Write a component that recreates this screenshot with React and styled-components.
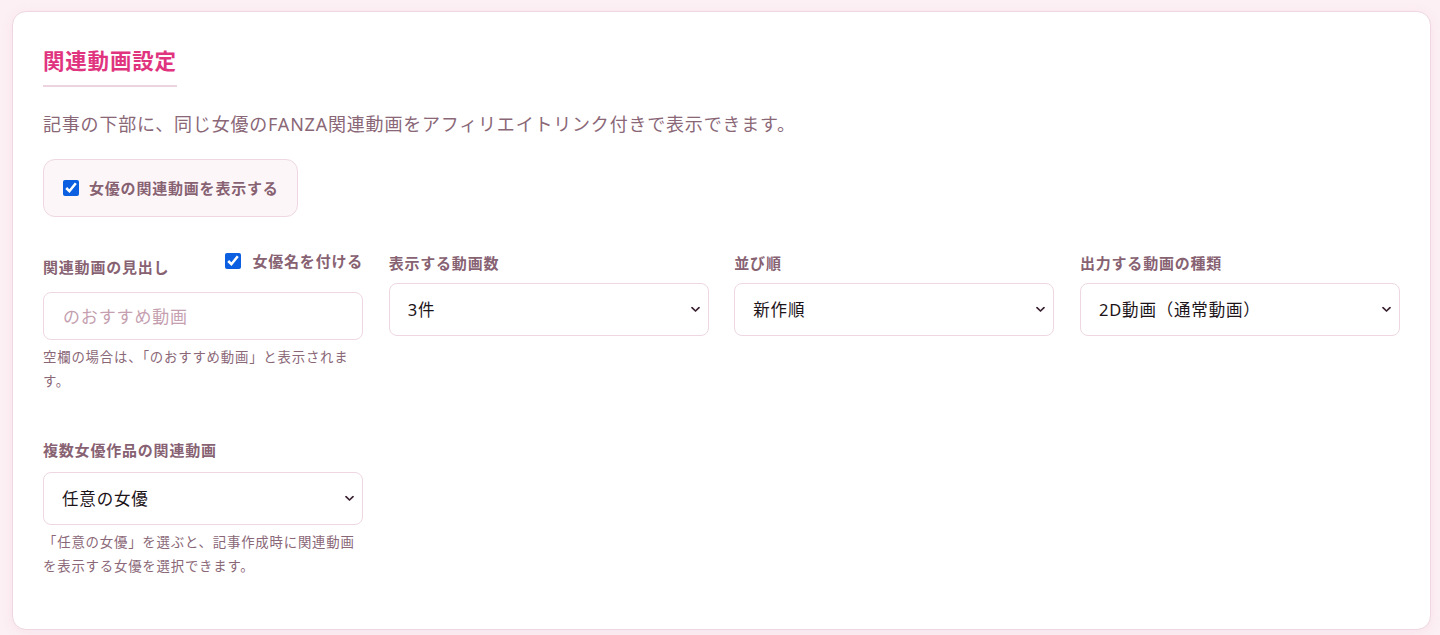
import React from 'react'
import styled, { createGlobalStyle } from 'styled-components'

const colors = {
  page: '#fcf0f4',
  border: '#eed7e2',
  pink: '#e0347f',
  text: '#8a6777',
  label: '#876272',
  placeholder: '#c59fb0',
  dark: '#1c1418'
}

const GlobalStyle = createGlobalStyle`
  html, body {
    margin: 0;
    padding: 0;
    background: ${colors.page};
  }
  body {
    font-family: "Noto Sans", "Noto Sans CJK JP", sans-serif;
    letter-spacing: 0.05em;
  }
  * { box-sizing: border-box; }
`

const Page = styled.div`
  padding: 11px 9px 6px 12px;
`

const Card = styled.section`
  background: #fff;
  border: 1px solid ${colors.border};
  border-radius: 14px;
  box-shadow: 0 2px 12px rgba(214, 140, 170, 0.12);
  padding: 30px 30px 51px 30px;
`

const Title = styled.h2`
  display: inline-block;
  margin: 0;
  font-size: 21.5px;
  font-weight: 700;
  line-height: 37px;
  color: ${colors.pink};
  padding-bottom: 6px;
  border-bottom: 2px solid #ebd3df;
`

const Description = styled.p`
  margin: 22px 0 0;
  font-size: 18px;
  line-height: 30px;
  color: ${colors.text};
`

const ToggleBox = styled.label`
  display: inline-flex;
  align-items: center;
  gap: 10px;
  margin-top: 20px;
  padding: 16px 18px 16px 19px;
  border: 1px solid ${colors.border};
  border-radius: 12px;
  background: #fdf6f9;
  font-size: 15px;
  font-weight: 700;
  line-height: 24px;
  color: ${colors.label};
`

const Check = styled.input.attrs({ type: 'checkbox' })`
  width: 16px;
  height: 16px;
  margin: 0;
  accent-color: #0b5fe0;
`

const Grid = styled.div`
  display: grid;
  grid-template-columns: repeat(4, 1fr);
  column-gap: 25.6px;
  row-gap: 45px;
  margin-top: 34px;
`

const Field = styled.div`
  display: flex;
  flex-direction: column;
  min-width: 0;
`

const HeaderRow = styled.div`
  display: flex;
  justify-content: space-between;
  align-items: flex-start;
  margin-bottom: ${({ gap }) => gap || '8px'};
`

const Label = styled.div`
  font-size: 15px;
  font-weight: 600;
  line-height: 24px;
  color: ${colors.label};
  margin-top: ${({ offset }) => offset || 0};
  margin-bottom: ${({ gap }) => gap || 0};
`

const InlineCheck = styled.label`
  display: flex;
  align-items: center;
  gap: 11px;
  margin-top: -2px;
  font-size: 15px;
  font-weight: 700;
  line-height: 24px;
  color: ${colors.label};
`

const TextInput = styled.input`
  width: 100%;
  height: 48px;
  padding: 0 19px;
  border: 1px solid ${colors.border};
  border-radius: 8px;
  font-family: inherit;
  font-size: 17px;
  letter-spacing: 0.05em;
  color: ${colors.dark};
  background: #fff;
  outline: none;

  &::placeholder {
    color: ${colors.placeholder};
  }
`

const SelectWrap = styled.div`
  position: relative;
`

const Select = styled.select`
  appearance: none;
  width: 100%;
  height: 53px;
  padding: 0 30px 0 18px;
  border: 1px solid ${colors.border};
  border-radius: 8px;
  background: #fff;
  font-family: inherit;
  font-size: 16.5px;
  letter-spacing: 0.05em;
  color: ${colors.dark};
  outline: none;
`

const Chevron = styled.svg`
  position: absolute;
  right: 9px;
  top: 50%;
  transform: translateY(-60%);
  pointer-events: none;
`

const Help = styled.p`
  margin: 5px 0 0;
  font-size: 13.4px;
  line-height: 24px;
  color: ${colors.text};
`

const Dropdown = ({ value, options }) => (
  <SelectWrap>
    <Select defaultValue={value}>
      {options.map(o => <option key={o}>{o}</option>)}
    </Select>
    <Chevron width="9" height="6" viewBox="0 0 9 6" fill="none">
      <path d="M1 1.2 L4.5 4.6 L8 1.2" stroke="#3a2230" strokeWidth="1.7" strokeLinecap="round" strokeLinejoin="round" />
    </Chevron>
  </SelectWrap>
)

export default function App () {
  return (
    <Page>
      <GlobalStyle />
      <Card>
        <Title>関連動画設定</Title>
        <Description>記事の下部に、同じ女優のFANZA関連動画をアフィリエイトリンク付きで表示できます。</Description>
        <ToggleBox>
          <Check defaultChecked />
          女優の関連動画を表示する
        </ToggleBox>

        <Grid>
          <Field>
            <HeaderRow gap="13px">
              <Label offset="4px">関連動画の見出し</Label>
              <InlineCheck>
                <Check defaultChecked />
                女優名を付ける
              </InlineCheck>
            </HeaderRow>
            <TextInput placeholder="のおすすめ動画" />
            <Help>空欄の場合は、「のおすすめ動画」と表示されます。</Help>
          </Field>
          <Field>
            <Label gap="8px">表示する動画数</Label>
            <Dropdown value="3件" options={['1件', '2件', '3件', '4件', '5件', '6件']} />
          </Field>
          <Field>
            <Label gap="8px">並び順</Label>
            <Dropdown value="新作順" options={['新作順', '人気順', 'ランダム']} />
          </Field>
          <Field>
            <Label gap="8px">出力する動画の種類</Label>
            <Dropdown value="2D動画（通常動画）" options={['2D動画（通常動画）', 'VR動画', 'すべて']} />
          </Field>
          <Field>
            <Label gap="10px">複数女優作品の関連動画</Label>
            <Dropdown value="任意の女優" options={['任意の女優', '最初の女優', 'すべての女優']} />
            <Help>「任意の女優」を選ぶと、記事作成時に関連動画を表示する女優を選択できます。</Help>
          </Field>
        </Grid>
      </Card>
    </Page>
  )
}
